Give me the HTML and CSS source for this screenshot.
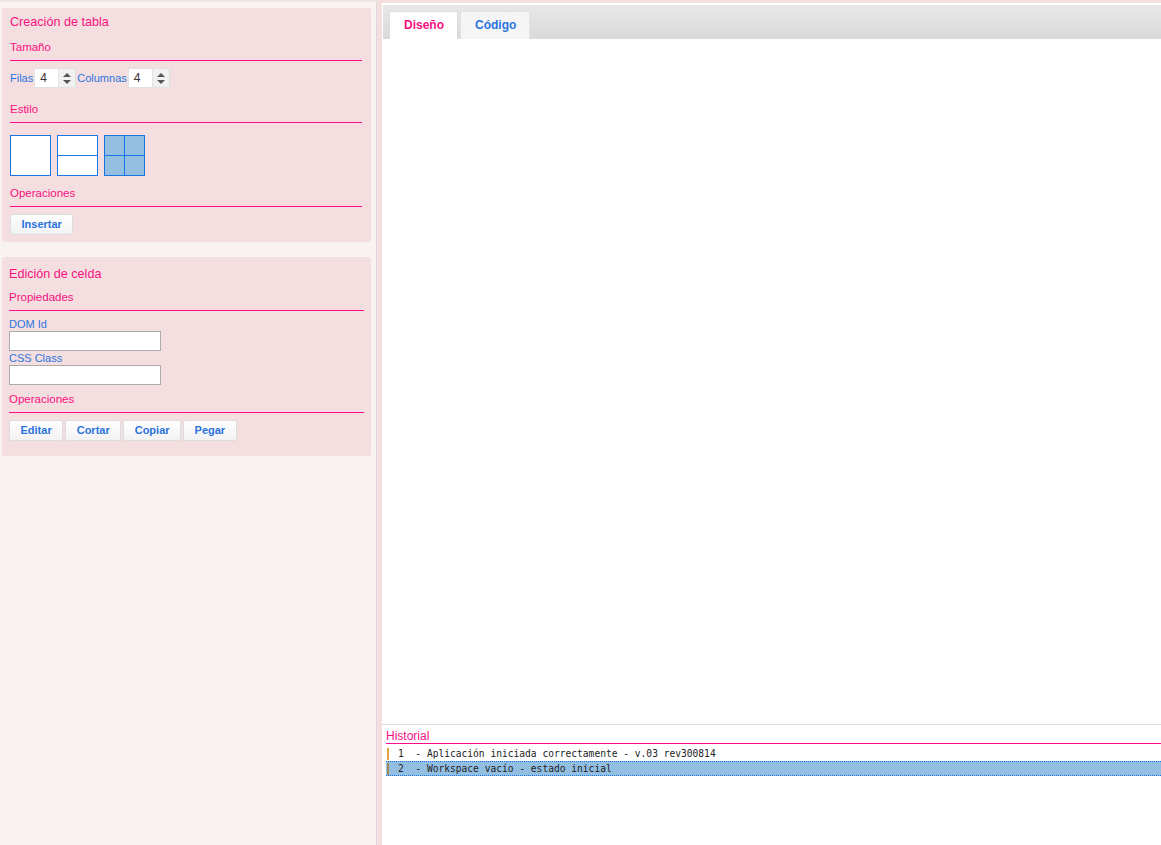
FILE: index.html
```html
<!DOCTYPE html>
<html lang="es">
<head>
<meta charset="utf-8">
<title>Editor de tablas</title>
<link rel="stylesheet" href="styles.css">
</head>
<body>
<div class="app">
  <aside class="sidebar">
    <section class="panel panel-create">
      <h2 class="panel-title">Creación de tabla</h2>
      <h3 class="section-title first">Tamaño</h3>
      <div class="size-row">
        <span class="label">Filas</span>
        <div class="spinner">
          <span class="spin-value">4</span>
          <span class="spin-btns"><span class="tri-up"></span><span class="tri-down"></span></span>
        </div>
        <span class="label">Columnas</span>
        <div class="spinner">
          <span class="spin-value">4</span>
          <span class="spin-btns"><span class="tri-up"></span><span class="tri-down"></span></span>
        </div>
      </div>
      <h3 class="section-title estilo">Estilo</h3>
      <div class="styles-row">
        <div class="style-box"></div>
        <div class="style-box rows"><div class="cell"></div><div class="cell"></div></div>
        <div class="style-box grid"><div class="cell"></div><div class="cell"></div><div class="cell"></div><div class="cell"></div></div>
      </div>
      <h3 class="section-title ops">Operaciones</h3>
      <div class="btn-row">
        <button class="btn">Insertar</button>
      </div>
    </section>

    <section class="panel panel-edit">
      <h2 class="panel-title">Edición de celda</h2>
      <h3 class="section-title props">Propiedades</h3>
      <label class="field-label first-label">DOM Id</label>
      <input class="text-input" type="text">
      <label class="field-label">CSS Class</label>
      <input class="text-input" type="text">
      <h3 class="section-title ops2">Operaciones</h3>
      <div class="btn-row btn-row-edit">
        <button class="btn">Editar</button>
        <button class="btn">Cortar</button>
        <button class="btn">Copiar</button>
        <button class="btn">Pegar</button>
      </div>
    </section>
  </aside>

  <main class="main">
    <div class="tabbar">
      <div class="tab active">Diseño</div>
      <div class="tab">Código</div>
    </div>
    <div class="workspace"></div>
    <div class="history">
      <div class="history-title">Historial</div>
      <div class="log">
        <div class="log-entry"><span class="log-bar"></span><span class="log-text">1  - Aplicación iniciada correctamente - v.03 rev300814</span></div>
        <div class="log-entry selected"><span class="log-bar"></span><span class="log-text">2  - Workspace vacío - estado inicial</span></div>
      </div>
    </div>
  </main>
</div>
</body>
</html>
```

FILE: styles.css
```css
* { box-sizing: border-box; }

html, body {
  margin: 0;
  padding: 0;
  height: 100%;
}

body {
  background: #f5dede;
  font-family: "Liberation Sans", Arial, sans-serif;
  overflow: hidden;
}

.app {
  display: flex;
  height: 845px;
}

/* ---------- Sidebar ---------- */
.sidebar {
  width: 377px;
  flex: none;
  background: #f8f3f2;
  border-top: 2px solid #ece5e5;
  border-right: 1px solid #e0d8d8;
  padding: 6px 5px 0 2px;
}

.panel {
  background: #f5dedf;
  border-radius: 3px;
}

.panel-create {
  padding: 6px 9px 7px 8px;
}

.panel-edit {
  margin-top: 15px;
  padding: 9px 7px 15px 7px;
}

.panel-title {
  margin: 0;
  font-size: 12.6px;
  line-height: 16px;
  font-weight: normal;
  color: #f8107f;
}

.section-title {
  margin: 0;
  font-size: 11.5px;
  line-height: 14px;
  font-weight: normal;
  color: #f8107f;
  padding-bottom: 6px;
  border-bottom: 1px solid #ff0a8a;
}

.section-title.first { margin-top: 10px; }
.section-title.estilo { margin-top: 14px; }
.section-title.ops { margin-top: 10px; }
.section-title.props { margin-top: 8px; }
.section-title.ops2 { margin-top: 7px; }

.label, .field-label {
  font-size: 11px;
  color: #2a74e0;
}

/* size row */
.size-row {
  display: flex;
  align-items: center;
  gap: 1px;
  margin-top: 7px;
  height: 20px;
}

.spinner {
  display: flex;
  width: 42px;
  height: 20px;
  background: #fff;
  border: 1px solid #e2e2e2;
}

.spin-value {
  flex: 1;
  font-size: 12px;
  line-height: 18px;
  padding-left: 5px;
  color: #3a3030;
}

.spin-btns {
  width: 17px;
  background: #f1f1f1;
  border-left: 1px solid #e4e4e4;
  display: flex;
  flex-direction: column;
  align-items: center;
  justify-content: center;
  gap: 3px;
}

.tri-up, .tri-down {
  width: 0;
  height: 0;
  border-left: 4px solid transparent;
  border-right: 4px solid transparent;
}
.tri-up { border-bottom: 4px solid #555; }
.tri-down { border-top: 4px solid #555; }

/* style boxes */
.styles-row {
  display: flex;
  gap: 6px;
  margin-top: 12px;
}

.style-box {
  width: 41px;
  height: 41px;
  border: 1px solid #1b74e4;
  background: #fff;
}

.style-box.rows {
  display: flex;
  flex-direction: column;
}
.style-box.rows .cell {
  flex: 1;
}
.style-box.rows .cell + .cell {
  border-top: 1px solid #1b74e4;
}

.style-box.grid {
  display: grid;
  grid-template-columns: 1fr 1fr;
  grid-template-rows: 1fr 1fr;
  background: #93bfe1;
}
.style-box.grid .cell:nth-child(1),
.style-box.grid .cell:nth-child(3) {
  border-right: 1px solid #1b74e4;
}
.style-box.grid .cell:nth-child(1),
.style-box.grid .cell:nth-child(2) {
  border-bottom: 1px solid #1b74e4;
}

/* buttons */
.btn-row {
  display: flex;
  gap: 2px;
  margin-top: 7px;
}
.btn-row-edit { margin-top: 7px; }

.btn {
  font-family: "Liberation Sans", Arial, sans-serif;
  font-size: 11px;
  font-weight: bold;
  color: #2a72de;
  height: 21px;
  padding: 0 10.5px;
  background: linear-gradient(#ffffff, #f2f2f2);
  border: 1px solid #dcdcdc;
  border-radius: 2px;
  line-height: 19px;
}

/* fields */
.field-label {
  display: block;
  line-height: 13px;
  margin-top: 1px;
}
.field-label.first-label { margin-top: 7px; }

.text-input {
  display: block;
  width: 152px;
  height: 20px;
  border: 1px solid #ababab;
  background: #fff;
  margin: 0;
  padding: 0 3px;
}

/* ---------- Main ---------- */
.main {
  flex: 1;
  margin-left: 5px;
  margin-top: 3px;
  background: #fff;
  display: flex;
  flex-direction: column;
  min-width: 0;
}

.tabbar {
  margin: 2px 0 0 1px;
  height: 34px;
  flex: none;
  background: linear-gradient(#e8e8e8, #d9d9d9);
  border-top: 1px solid #e4e4e4;
  display: flex;
  align-items: flex-end;
  gap: 2px;
  padding-left: 6px;
}

.tab {
  height: 28px;
  padding: 0 13px 0 14px;
  font-size: 12px;
  font-weight: bold;
  line-height: 26px;
  color: #2a74e0;
  background: #f5f5f5;
  border: 1px solid #e2e2e2;
  border-bottom: none;
}

.tab.active {
  background: #fff;
  color: #f8107f;
  border-color: #dcdcdc;
}

.workspace {
  flex: 1;
  background: #fff;
  border-bottom: 1px solid #dedede;
}

.history {
  height: 120px;
  flex: none;
  padding-left: 4px;
}

.history-title {
  margin-top: 4px;
  font-size: 12px;
  line-height: 14px;
  color: #f8107f;
  border-bottom: 1px solid #ff0a8a;
}

.log {
  margin-top: 3px;
  font-family: "DejaVu Sans Mono", "Liberation Mono", monospace;
  font-size: 9.6px;
  color: #222;
}

.log-entry {
  display: flex;
  align-items: center;
  height: 13px;
  line-height: 13px;
  padding-left: 1px;
}

.log-entry.selected {
  height: 15px;
  background: #92bee2;
  border-top: 1px dotted #1a78e6;
  border-bottom: 1px dotted #1a78e6;
  margin-top: 1px;
}

.log-bar {
  width: 2px;
  height: 12px;
  background: #e8a23c;
  margin-right: 9px;
  flex: none;
}

.log-entry.selected .log-bar {
  background: #a48a5a;
}

.log-text {
  white-space: pre;
}
```
